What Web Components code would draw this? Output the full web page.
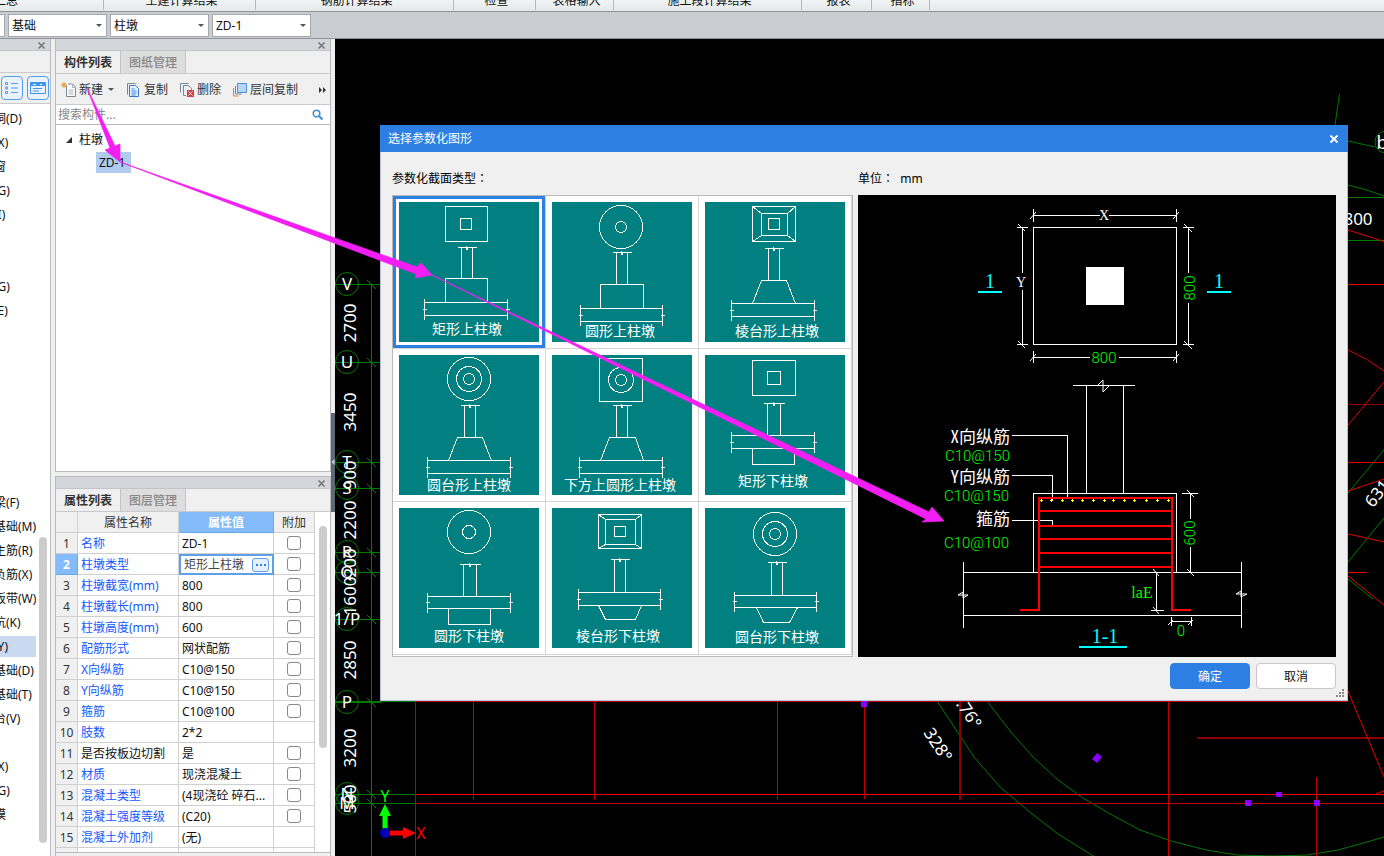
<!DOCTYPE html>
<html lang="zh-CN">
<head>
<meta charset="utf-8">
<title>选择参数化图形</title>
<style>
html, body { margin: 0; height: 100%; overflow: hidden; }
body { font: 12px/16px "Noto Sans", "Noto Sans CJK SC", sans-serif; color: #111; background: #f0f0f0; }
</style>
</head>
<body>
<cad-app></cad-app>
<script>
function define(name, html, setup) {
  const template = document.createElement('template');
  template.innerHTML = html;
  customElements.define(name, class extends HTMLElement {
    connectedCallback() {
      if (this.shadowRoot) return;
      const root = this.attachShadow({ mode: 'open' });
      root.append(template.content.cloneNode(true));
      if (setup) setup(root, this);
    }
  });
}

const base = `* { box-sizing: border-box; } button, input, select { font: inherit; color: inherit; margin: 0; padding: 0; }`;

/* ---------- ribbon: captions of the command groups ---------- */
define('ribbon-captions', `
<style>${base}
:host { display: flex; height: 12px; overflow: hidden; background: linear-gradient(#f1f4f4, #e4e9ea); border-bottom: 1px solid #8e9394; }
.g { flex: none; height: 10px; border-right: 1px solid #b5b9ba; text-align: center; padding-left: 4px; }
.g span { display: block; margin-top: -7px; line-height: 16px; white-space: nowrap; }
.first { text-align: left; padding: 0; } .first span { margin-left: -6px; }
</style>
<div class="g first" style="width:104px"><span>汇总</span></div>
<div class="g" style="width:152px"><span>土建计算结果</span></div>
<div class="g" style="width:198px"><span>钢筋计算结果</span></div>
<div class="g" style="width:82px"><span>检查</span></div>
<div class="g" style="width:78px"><span>表格输入</span></div>
<div class="g" style="width:188px"><span>施工段计算结果</span></div>
<div class="g" style="width:70px"><span>报表</span></div>
<div class="g" style="width:58px"><span>指标</span></div>
`);

/* ---------- floor / category / component selectors ---------- */
define('selector-bar', `
<style>${base}
:host { display: flex; gap: 3px; height: 27px; padding: 2px 0 1px; background: #c9ccd1; border-bottom: 1px solid #8f9499; overflow: hidden; }
label { flex: none; position: relative; width: 99px; height: 23px; }
label:first-of-type { margin-left: -94px; }
select { appearance: none; width: 100%; height: 100%; background: #fff; border: 1px solid #a5a8ac; border-radius: 0; padding: 1px 3px 0; outline: 0; color: #111; }
label::after { content: ""; position: absolute; right: 5px; top: 10px; border: 3px solid transparent; border-top-color: #555; border-bottom: 0; }
</style>
<label><select aria-label="楼层"><option></option></select></label>
<label><select aria-label="构件分类"><option>基础</option></select></label>
<label><select aria-label="构件类型"><option>柱墩</option></select></label>
<label><select aria-label="构件"><option>ZD-1</option></select></label>
`);

/* ---------- grey strip with a close button on top of a docked panel ---------- */
define('dock-strip', `
<style>${base}
:host { display: flex; flex: none; justify-content: flex-end; align-items: center; height: 12px; background: #d5d6dc; border-bottom: 1px solid #c3c4c8; padding: 1px 4px 0 0; }
button { width: 9px; height: 9px; border: 0; background: none; display: flex; }
</style>
<button aria-label="关闭"><svg width="9" height="9"><path d="M1.500 1.500l6 6M7.500 1.500l-6 6" stroke="#777" stroke-width="1.600"/></svg></button>
`);

/* ---------- left module tree ---------- */
define('module-list', `
<style>${base}
:host { display: flex; flex-direction: column; flex: none; width: 51px; border-right: 1px solid #b9babd; background: #f0f0f0; }
.blank { height: 22px; border-bottom: 1px solid #c9cacc; flex: none; }
.views { height: 31px; flex: none; display: flex; gap: 4px; padding: 3px 0 0 1px; border-bottom: 1px solid #c9cacc; }
.views button { width: 22px; height: 24px; border: 1px solid #4d9fee; border-radius: 4px; background: #e9f2fc; display: grid; place-items: center; }
.body { flex: 1; min-height: 0; display: flex; justify-content: space-between; background: #fff; overflow: hidden; padding-top: 3px; }
ul { list-style: none; margin: 0; padding: 0; width: 36px; overflow: hidden; }
li { height: 24px; line-height: 24px; white-space: nowrap; }
li span { margin-left: -30px; }
li.sel { background: #c8d9f0; background-clip: content-box; padding: 1px 0 2px; line-height: 21px; }
.bar { width: 11px; padding: 430px 3px 0 0; }
.bar i { display: block; width: 8px; height: 306px; border-radius: 4px; background: #ccc; }
</style>
<dock-strip></dock-strip>
<div class="blank"></div>
<div class="views">
<button aria-label="列表"><svg width="16" height="16" fill="none" stroke="#4d9fee"><path d="M1.500 2.500h2v2h-2zM1.500 7h2v2h-2zM1.500 11.500h2v2h-2z"/><path d="M7 3.500h7M7 8h7M7 12.500h7"/></svg></button>
<button aria-label="图标"><svg width="16" height="16" fill="none" stroke="#3d95ea"><path d="M.5 2.500h15v11H.5z"/><path d="M1 4.500h14" stroke-width="3"/><path d="M3 4.500h3M10 4.500h2" stroke="#fff"/><path d="M3 8.500h9M3 11h6"/></svg></button>
</div>
<div class="body"><ul></ul><div class="bar"><i></i></div></div>
`, root => {
  const rows = ['带形洞(D)', '飘窗(X)', '老虎窗', '过梁(G)', '壁龛(I)', '', '', '连梁(G)', '圈梁(E)', '', '', '', '', '', '', '',
    '基础梁(F)', '筏板基础(M)', '筏板主筋(R)', '筏板负筋(X)', '基础板带(W)', '集水坑(K)', '柱墩(Y)', '独立基础(D)', '条形基础(T)', '桩承台(V)', '', '垫层(X)', '地沟(G)', '砖胎模'];
  root.querySelector('ul').innerHTML = rows.map(r => `<li${r === '柱墩(Y)' ? ' class="sel"' : ''}><span>${r}</span></li>`).join('');
});

/* ---------- pair of tabs ---------- */
define('tab-pair', `
<style>${base}
:host { display: flex; flex: none; height: 23px; background: #f0f0f0; border-bottom: 1px solid #c9cacc; }
button { width: 65px; border: 0; border-right: 1px solid #c3c4c6; background: #f0f0f0; font-weight: 700; color: #333; white-space: nowrap; padding-top: 2px; }
button + button { background: #dedede; color: #888; }
</style>
<button><slot name="on"></slot></button><button style="font-weight:500"><slot name="off"></slot></button>
`);

/* ---------- component list ---------- */
define('component-panel', `
<style>${base}
:host { display: flex; flex-direction: column; flex: 1; min-height: 0; border: solid #b9babd; border-width: 0 1px 1px; background: #fff; }
.tools { flex: none; height: 31px; display: flex; align-items: center; background: #f0f0f0; border-bottom: 1px solid #c9cacc; padding: 2px 3px 0 5px; gap: 11px; }
.tools button { border: 0; background: none; display: flex; align-items: center; gap: 2px; color: #333; white-space: nowrap; }
.tools button svg + svg, .drop { margin-left: 3px; }
.tools button:last-child { margin-left: auto; }
.search { flex: none; height: 20px; display: flex; align-items: center; border-bottom: 1px solid #b9babd; padding: 0 7px 0 2px; }
.search input { flex: 1; min-width: 0; border: 0; outline: 0; height: 18px; }
.search input::placeholder { color: #888; opacity: 1; }
.search svg { flex: none; }
ul { list-style: none; margin: 0; padding: 0; }
.tree { padding-top: 3px; flex: 1; }
.tree > li > span { display: flex; align-items: center; height: 24px; gap: 6px; padding-left: 9px; }
.tree ul span { display: block; width: 35px; margin-left: 40px; padding-left: 3px; height: 21px; line-height: 21px; background: #b0cbee; }
</style>
<dock-strip></dock-strip>
<tab-pair><span slot="on">构件列表</span><span slot="off">图纸管理</span></tab-pair>
<div class="tools">
<button><svg width="16" height="16" fill="none"><path d="M5.500 3.500v11h9V5l-3-3H7" fill="#fff" stroke="#7a8790"/><path d="M11.500 2v3.500H15M7.500 8h5M7.500 10h5M7.500 12h5" stroke="#a9b2b8"/><path d="M1 1l4 4M5 1L1 5M3 0v6M0 3h6" stroke="#f0952c"/></svg>新建<svg class="drop" width="7" height="4"><path d="M0 0h6L3 3z" fill="#555"/></svg></button>
<button><svg width="16" height="16" fill="none"><path d="M1.500 12.500v-11h8" stroke="#7a8790"/><path d="M3.500 3.500h6l3 3v8h-9z" fill="#e4f0fd" stroke="#3a78c8"/><path d="M5.500 7h3M5.500 9h5M5.500 11h5M5.500 13h4" stroke="#3a8be8"/></svg>复制</button>
<button><svg width="16" height="16" fill="none"><path d="M1.500 10.500v-9h8M4.500 13.500v-10h5l3 3V8M4.500 13.500H7" stroke="#7a8790"/><path d="M8 8h7v7H8z" fill="#d43f3f"/><path d="M9.500 9.500l4 4M13.500 9.500l-4 4" stroke="#fff"/></svg>删除</button>
<button><svg width="16" height="16" fill="none"><path d="M1.500 6v8h5" stroke="#ef7d2d"/><path d="M3.500 4v8h6" stroke="#7a8790"/><path d="M5.500 1.500h9v9h-9z" fill="#b5d7fb" stroke="#4b8fdb"/></svg>层间复制</button>
<button aria-label="更多"><svg width="8" height="8" fill="#333"><path d="M0 1l3 3-3 3zM4 1l3 3-3 3z"/></svg></button>
</div>
<div class="search"><input type="text" placeholder="搜索构件..." aria-label="搜索构件"><svg width="11" height="11" fill="none" stroke="#3f93d4" stroke-width="1.600"><circle cx="4.500" cy="4.500" r="3.300"/><path d="M7 7l3.500 3.500" stroke-width="2.200"/></svg></div>
<ul class="tree"><li><span><svg width="8" height="8"><path d="M7 1v6H1z" fill="#333"/></svg>柱墩</span><ul><li><span>ZD-1</span></li></ul></li></ul>
`);

/* ---------- property table ---------- */
define('property-panel', `
<style>${base}
:host { display: flex; flex-direction: column; flex: none; border: solid #b9babd; border-width: 1px 1px 0; background: #fff; }
.wrap { display: flex; border-bottom: 1px solid #b9babd; }
table { table-layout: fixed; width: 259px; border-collapse: separate; border-spacing: 0; }
th, td { height: 21px; padding: 2px 3px 0; border: solid #d0d0d0; border-width: 0 1px 1px 0; font-weight: 400; white-space: nowrap; overflow: hidden; text-align: left; line-height: 16px; }
thead th { background: #f0f0f0; text-align: center; color: #333; }
thead th.on, tbody th.on { background: #84bcfb; color: #fff; font-weight: 700; border-color: #6aa8ea; }
tbody th { background: #f0f0f0; text-align: center; color: #333; padding: 2px 0 0; }
td:nth-child(2) { color: #1458ff; } tr.own td:nth-child(2) { color: #111; }
td:last-child { text-align: center; padding: 0; }
td.edit { padding: 1px 4px 0 4px; border: 1px solid #5e9fe6; outline: 1px solid #5e9fe6; outline-offset: -2px; color: #444; }
td.edit div { display: flex; justify-content: space-between; align-items: center; height: 16px; }
td.edit button { width: 17px; height: 14px; border: 1px solid #5e9fe6; border-radius: 3px; background: #e4f0fd; display: flex; align-items: center; justify-content: center; }
input { appearance: none; display: block; width: 14px; height: 14px; margin: 0 auto !important; border: 1px solid #888; border-radius: 3px; background: #fff; }
.last td, .last th { height: 4px; border-bottom: 0; padding: 0; }
.bar { flex: 1; padding: 14px 0 0 4px; }
.bar i { display: block; width: 8px; height: 222px; border-radius: 4px; background: #ccc; }
.foot { height: 3px; background: #f0f0f0; }
</style>
<dock-strip></dock-strip>
<tab-pair><span slot="on">属性列表</span><span slot="off">图层管理</span></tab-pair>
<div class="wrap"><table>
<colgroup><col style="width:22px"><col style="width:101px"><col style="width:95px"><col style="width:41px"></colgroup>
<thead><tr><th></th><th>属性名称</th><th class="on">属性值</th><th>附加</th></tr></thead><tbody></tbody></table>
<div class="bar"><i></i></div></div>
<div class="foot"></div>
`, root => {
  const rows = [['名称', 'ZD-1', 1], ['柱墩类型', '矩形上柱墩', 1], ['柱墩截宽(mm)', '800', 1], ['柱墩截长(mm)', '800', 1], ['柱墩高度(mm)', '600', 1],
    ['配筋形式', '网状配筋', 1], ['X向纵筋', 'C10@150', 1], ['Y向纵筋', 'C10@150', 1], ['箍筋', 'C10@100', 1], ['肢数', '2*2', 0],
    ['是否按板边切割', '是', 1], ['材质', '现浇混凝土', 1], ['混凝土类型', '(4现浇砼 碎石...', 1], ['混凝土强度等级', '(C20)', 1], ['混凝土外加剂', '(无)', 0]];
  root.querySelector('tbody').innerHTML = rows.map(([n, v, c], i) => {
    const value = i === 1
      ? `<td class="edit"><div>${v}<button aria-label="选择"><svg width="10" height="2" fill="#2d7fe3"><path d="M0 0h2v2H0zM4 0h2v2H4zM8 0h2v2H8z"/></svg></button></div></td>`
      : `<td>${v}</td>`;
    return `<tr${i === 10 ? ' class="own"' : ''}><th${i === 1 ? ' class="on"' : ''}>${i + 1}</th><td>${n}</td>${value}<td>${c ? `<input type="checkbox" aria-label="${n}附加">` : ''}</td></tr>`;
  }).join('') + '<tr class="last"><th></th><td></td><td></td><td></td></tr>';
});

/* ---------- drawing canvas ---------- */
define('drawing-canvas', `
<style>
:host { display: block; flex: 1; min-width: 0; background: #000; overflow: hidden; }
svg { display: block; width: 100%; height: 100%; }
text { font-size: 17px; fill: #fff; text-anchor: middle; }
.g { stroke: #007a00; fill: none; } .r { stroke: #e00000; fill: none; } .d { stroke: #8c0000; fill: none; } .p { fill: #8a00ff; }
</style>
<svg><g transform="translate(-335 -39)">
<g class="g">
<path d="M371.500 284v572M335 701.500h80M335 794.500h80M335 803.500h80"/>
<g id="axes"></g>
<path d="M1339.500 94L1335 125M1348 141L1375 147M1348 185Q1366 189 1384 196M1348 197.500h36M1348 240.500h36M1348 493L1384 450M1348 562L1384 518M1348 579L1373 599"/>
<circle cx="1386" cy="142" r="11"/>
<path d="M937 701L974 757 1000 787 1031 813 1058 834 1095 857M987 701L1010 731 1033 757 1058 780 1083 798 1112 815 1140 830 1171 841 1206 850 1237 855 1273 856 1307 855 1338 850 1367 842 1384 837"/>
</g>
<path class="r" d="M415 794.500H1384" style="stroke:#f00"/>
<path class="r" style="stroke:#c00000" d="M415 701.500H1348M415 803.500H1384M415.500 702V856M777.500 702V800M864.500 702V799M594.500 702V800M1168.500 702V856M1316.500 777V856M473.500 702V800"/>
<path class="d" stroke-width="2" d="M960 702V800M1197 738H1384"/><path class="d" d="M1348 404.500h36"/>
<path class="r" d="M1348 284.500h36M1348 230L1384 241.500M1348 350Q1367 358 1384 371M1348 425L1384 382M1348 462.500h36M1348 491L1384 479M1348 534L1384 542M1348 572.500h19M1348 576L1384 605M1348 691L1384 777M1376 794L1384 791"/>
<path class="p" d="M861 701h6v6h-6zM1245 800h6v6h-6zM1276 792h6v5h-6zM1314 800h6v6h-6zM1092 759l5-6 5 4-5 6z"/>
<g id="labels"></g>
<text x="1358" y="225">800</text>
<text x="1382" y="149" style="font-size:18px">b</text>
<text transform="translate(1382 497) rotate(-52)">631</text>
<text transform="translate(933 748) rotate(57)">328°</text>
<text transform="translate(964 717) rotate(57)">.76°</text>
<path d="M385 831v-18" stroke="#0f0" stroke-width="5"/><path d="M385 804l6 12h-12z" fill="#0f0"/>
<path d="M388 833h17" stroke="#f00" stroke-width="5"/><path d="M416 833l-13-6v12z" fill="#f00"/>
<circle cx="385" cy="833" r="5" fill="#0000b8"/>
<text x="385" y="802" style="fill:#0f0;font-size:16px">Y</text><text x="421" y="839" style="fill:#f00;font-size:16px">X</text>
</g></svg>
`, root => {
  const axes = [['V', 284], ['U', 362], ['T', 462], ['S', 488], ['R', 552], ['Q', 572], ['1/P', 619], ['P', 702], ['N', 794], ['M', 803]];
  root.querySelector('#axes').innerHTML = axes.map(([, y]) => `<circle cx="347" cy="${y}" r="11.500"/><path d="M335 ${y}.500h46M367 ${y - 4}l9 9"/>`).join('');
  const dims = [['2700', 323], ['3450', 412], ['900', 475], ['2200', 520], ['200', 563], ['1600', 596], ['2850', 660], ['3200', 748], ['500', 799]];
  root.querySelector('#labels').innerHTML = axes.map(([t, y]) => `<text x="347" y="${y + 6}">${t}</text>`).join('')
    + dims.map(([t, y]) => `<text transform="translate(356 ${y}) rotate(-90)">${t}</text>`).join('');
});

/* ---------- one section type; drawn from a short list of coordinates ---------- */
const sections = [
  { name: '矩形上柱墩', x: 68, y: 132, rects: [[46, 4, 42, 35], [61, 16, 11, 11]], col: [62, 73, 45, 76], beam: [25, 108, 100, 113], path: 'M46 100V76H88V100' },
  { name: '圆形上柱墩', x: 68, y: 134, circles: [[69, 25, 21.5], [69, 25, 5.5]], col: [64, 75, 50, 82], beam: [28, 110, 106, 119], path: 'M48 106V82H91V106' },
  { name: '棱台形上柱墩', x: 72, y: 134, rects: [[47, 4, 43, 35], [56, 11, 26, 22], [63, 16, 11, 11]], col: [63, 74, 46, 78], beam: [26, 109, 101, 114], path: 'M47 101L56 78H81L90 101M47 4l9 7M90 4l-8 7M47 39l9-6M90 39l-8-6' },
  { name: '圆台形上柱墩', x: 70, y: 135, circles: [[70, 24, 21.5], [70, 24, 12.5], [70, 24, 5.5]], col: [65, 76, 50, 82], beam: [28, 111, 105, 118], path: 'M49 105L58 82H83L92 105' },
  { name: '下方上圆形上柱墩', x: 68, y: 135, rects: [[47, 3, 43, 43]], circles: [[69, 25, 12.5], [69, 25, 5.5]], col: [64, 75, 50, 82], beam: [27, 110, 105, 118], path: 'M48 105L57 82H83L91 105' },
  { name: '矩形下柱墩', x: 68, y: 131, rects: [[47, 5, 43, 35], [62, 16, 13, 13]], col: [62, 75, 48, 80], beam: [26, 109, 80, 93], path: 'M47 93V109H89V93' },
  { name: '圆形下柱墩', x: 70, y: 133, circles: [[70, 24, 21.5], [70, 24, 6.5]], col: [64, 77, 56, 88], beam: [28, 111, 88, 100], path: 'M49 100V116H91V100' },
  { name: '棱台形下柱墩', x: 66, y: 133, rects: [[46, 6, 43, 34], [53, 11, 30, 25], [62, 18, 11, 10]], col: [62, 73, 51, 84], beam: [26, 108, 84, 97], path: 'M46 97L53 111H83L89 97M46 6l7 5M89 6l-6 5M46 40l7-4M89 40l-6-4' },
  { name: '圆台形下柱墩', x: 72, y: 134, circles: [[70, 26, 21.5], [70, 26, 12.5], [70, 26, 5.5]], col: [66, 77, 54, 87], beam: [29, 111, 87, 99], path: 'M51 99L58 114H84L92 99' }
];
define('section-thumb', `
<style>
:host { display: block; }
svg { display: block; width: 140px; height: 140px; background: #008080; }
g { fill: none; stroke: #fff; shape-rendering: crispEdges; }
text { fill: #fff; font: 14px "Noto Sans CJK SC", sans-serif; text-anchor: middle; }
</style>
<svg viewBox="0 0 140 140"><g transform="translate(.5 .5)"></g><text></text></svg>
`, (root, host) => {
  const s = sections[+host.getAttribute('index')];
  const [a, b, top, bottom] = s.col, [l, r, t, u] = s.beam, m = Math.floor((a + b) / 2), h = Math.round((t + u) / 2);
  root.querySelector('g').innerHTML =
    (s.rects || []).map(([x, y, w, k]) => `<rect x="${x}" y="${y}" width="${w}" height="${k}"/>`).join('') +
    (s.circles || []).map(([x, y, k]) => `<circle cx="${x - .5}" cy="${y - .5}" r="${k}"/>`).join('') +
    `<path d="M${a - 4} ${top}H${b + 4}M${m} ${top - 2}v4M${m + 1} ${top - 1}v3M${a} ${top}V${bottom}M${b} ${top}V${bottom}M${l} ${t}H${r}M${l} ${u}H${r}M${l} ${t - 4}V${u + 4}M${r} ${t - 4}V${u + 4}M${l - 2} ${h}h4M${r - 2} ${h}h4${s.path}"/>`;
  const text = root.querySelector('text');
  text.textContent = s.name;
  text.setAttribute('x', s.x);
  text.setAttribute('y', s.y);
});

/* ---------- preview of the chosen section ---------- */
define('section-preview', `
<style>
:host { display: block; background: #000; }
svg { display: block; width: 100%; }
.w { fill: none; stroke: #fff; } .w, .r { shape-rendering: crispEdges; }
.s { fill: none; stroke: #fff; }
.r { fill: none; stroke: #f00; stroke-width: 2; }
text { font: 300 15px Roboto, "Noto Sans CJK SC", sans-serif; fill: #0f0; text-anchor: middle; }
.e { text-anchor: end; }
.n { font: 17px "Noto Sans CJK SC", sans-serif; font-feature-settings: "hwid"; fill: #fff; }
.c { font: 20px "Liberation Serif", serif; fill: #00ffff; }
.l { font: 14px "Liberation Serif", serif; fill: #fff; }
</style>
<svg viewBox="858 195 478 462">
<g class="w">
<path d="M1033.500 227.500h143v117h-143zM1033.500 209v13M1176.500 209v13M1033 215.500h67M1109 215.500h67M1017 227.500h11M1017 344.500h11M1022.500 227v46M1022.500 290v55M1183 227.500h11M1183 344.500h11M1188.500 227v46M1188.500 303v42M1033.500 351v12M1176.500 351v12M1033 357.500h57M1119 357.500h57"/>
<path d="M1073 385.500h62M1086.500 386v107M1123.500 386v107M1033.500 572V493.500h143V572M963 572.500h278M963 615.500h278M963.500 562v66M1241.500 562v66M1012 435.500h55.500v63M1012 475.500h40.500v25M1012 520.500h40.500v5M1182 493.500h16M1190.500 493v26M1190.500 547v25M1156.500 572v38M1151 610.500h13M1171 621.500h20M1171.500 617v9M1191.500 617v9"/>
</g>
<path class="s" d="M1030 219l6-7M1173 219l6-7M1018 224l7 7M1018 341l7 7M1184 224l8 8M1184 341l8 8M1030 361l6-7M1173 361l6-7M1098 385l5-5v12l6-6M958 595h10M958 595l5-3v6l5-3M1236 594h11M1236 594l5-3v6l6-3M1187 490l7 7M1187 569l7 7M1153 569l6 7M1153 607l6 7M1168 625l5-5M1188 625l5-5"/>
<path fill="#fff" d="M1086 267h38v38h-38z"/>
<path class="r" d="M1020 610h19V498h133v112h19M1039 511h133M1039 526h133M1039 539h133M1039 553h133M1039 567h133"/>
<path stroke="#ff0" shape-rendering="crispEdges" id="dots"/>
<path stroke="#0ff" stroke-width="2" d="M978 292h24M1207 292h24M1079 647h48"/>
<text class="l" x="1104" y="220">X</text><text class="l" x="1021" y="287">Y</text>
<text x="1104" y="363">800</text><text transform="translate(1195 288) rotate(-90)">800</text>
<text transform="translate(1195 533) rotate(-90)">600</text>
<text class="c" x="990" y="288">1</text><text class="c" x="1219" y="288">1</text><text class="c" x="1105" y="643">1-1</text>
<text class="n e" x="1010" y="443">X向纵筋</text><text class="e" x="1010" y="461">C10@150</text>
<text class="n e" x="1010" y="483">Y向纵筋</text><text class="e" x="1009" y="501">C10@150</text>
<text class="n e" x="1010" y="525">箍筋</text><text class="e" x="1009" y="548">C10@100</text>
<text x="1142" y="598" style="font:16px 'Liberation Serif',serif">laE</text><text x="1181" y="636">0</text>
</svg>
`, root => {
  const xs = [1041, 1051, 1062, 1072, 1082, 1093, 1104, 1113, 1124, 1134, 1146, 1157, 1168];
  root.querySelector('#dots').setAttribute('d', xs.map(x => `M${x - 1} 500.500h3M${x}.500 499v3`).join(''));
});

/* ---------- dialog ---------- */
define('section-dialog', `
<style>${base}
:host { display: flex; flex-direction: column; background: #f0f0f0; border: 1px solid #b4c2d4; border-top: 0; }
header { height: 27px; margin: 0 -1px; padding: 0 9px 0 8px; background: #2d7fe3; color: #fff; display: flex; align-items: center; justify-content: space-between; }
header button { border: 0; background: none; width: 10px; height: 10px; display: flex; }
.main { display: flex; gap: 5px; padding: 14px 11px 0; }
.main p { margin: 0; height: 29px; line-height: 23px; white-space: pre; color: #000; }
.main p span { font-family: "Noto Sans CJK TC", sans-serif; }
.grid { display: grid; grid-template-columns: repeat(3, 153px); border: 1px solid #b9b9b9; background: #fff; padding-bottom: 1px; }
.grid button { height: 153px; border: solid #d4d4d4; border-width: 0 1px 1px 0; background: #fff; padding: 0 0 0 6px; display: flex; align-items: center; }
.grid .on { box-shadow: inset 0 0 0 3px #2d7fe3; }
.right { flex: 1; }
footer { display: flex; justify-content: flex-end; gap: 6px; padding: 6px 11px 11px; position: relative; }
footer button { width: 80px; height: 26px; border: 1px solid #c8c8c8; border-radius: 4px; background: #fff; color: #111; padding-top: 2px; }
footer .ok { background: #2d7fe3; border-color: #2d7fe3; color: #fff; }
footer svg { position: absolute; right: 3px; bottom: 3px; }
</style>
<header><span>选择参数化图形</span><button aria-label="关闭"><svg width="10" height="10"><path d="M1.500 1.500l7 7M8.500 1.500l-7 7" stroke="#fff" stroke-width="1.800"/></svg></button></header>
<div class="main">
<div><p>参数化截面类型<span lang="zh-TW">：</span></p><div class="grid"></div></div>
<div class="right"><p>单位<span lang="zh-TW">：</span>  mm</p><section-preview></section-preview></div>
</div>
<footer><button class="ok">确定</button><button>取消</button><svg width="8" height="8" fill="#888"><path d="M6 0h2v2H6zM6 3h2v2H6zM6 6h2v2H6zM3 3h2v2H3zM3 6h2v2H3zM0 6h2v2H0z"/></svg></footer>
`, root => {
  root.querySelector('.grid').innerHTML = sections.map((s, i) =>
    `<button${i ? '' : ' class="on"'} aria-label="${s.name}"><section-thumb index="${i}"></section-thumb></button>`).join('');
});

/* ---------- application shell ---------- */
define('cad-app', `
<style>${base}
:host { display: flex; flex-direction: column; height: 100vh; position: relative; overflow: hidden; }
.work { flex: 1; min-height: 0; display: flex; }
.dock { flex: none; width: 276px; margin-left: 4px; display: flex; flex-direction: column; gap: 4px; background: #f0f0f0; }
.split { flex: none; width: 4px; background: #f0f0f0; display: flex; align-items: center; }
.split i { width: 4px; height: 99px; margin-top: 29px; background: #5d6975; display: flex; align-items: center; }
section-dialog { position: absolute; left: 380px; top: 125px; width: 968px; }
.arrows { position: absolute; left: 0; top: 0; width: 100%; height: 100%; pointer-events: none; }
</style>
<ribbon-captions></ribbon-captions>
<selector-bar></selector-bar>
<div class="work">
<module-list></module-list>
<div class="dock"><component-panel></component-panel><property-panel></property-panel></div>
<div class="split"><i><svg width="4" height="6"><path d="M3.500 0v6L.5 3z" fill="#c8ccd0"/></svg></i></div>
<drawing-canvas></drawing-canvas>
</div>
<section-dialog></section-dialog>
<svg class="arrows" fill="#f31ef3" stroke="#f31ef3" stroke-width=".7"><path d="M87 88L115 146 120 144 120 162 105 150 110 148ZM120 162L417 267 421 263 432 275 415 278 416 274ZM432 275L929 512 932 507 944 521 922 522 926 519Z"/></svg>
`);
</script>
</body>
</html>
